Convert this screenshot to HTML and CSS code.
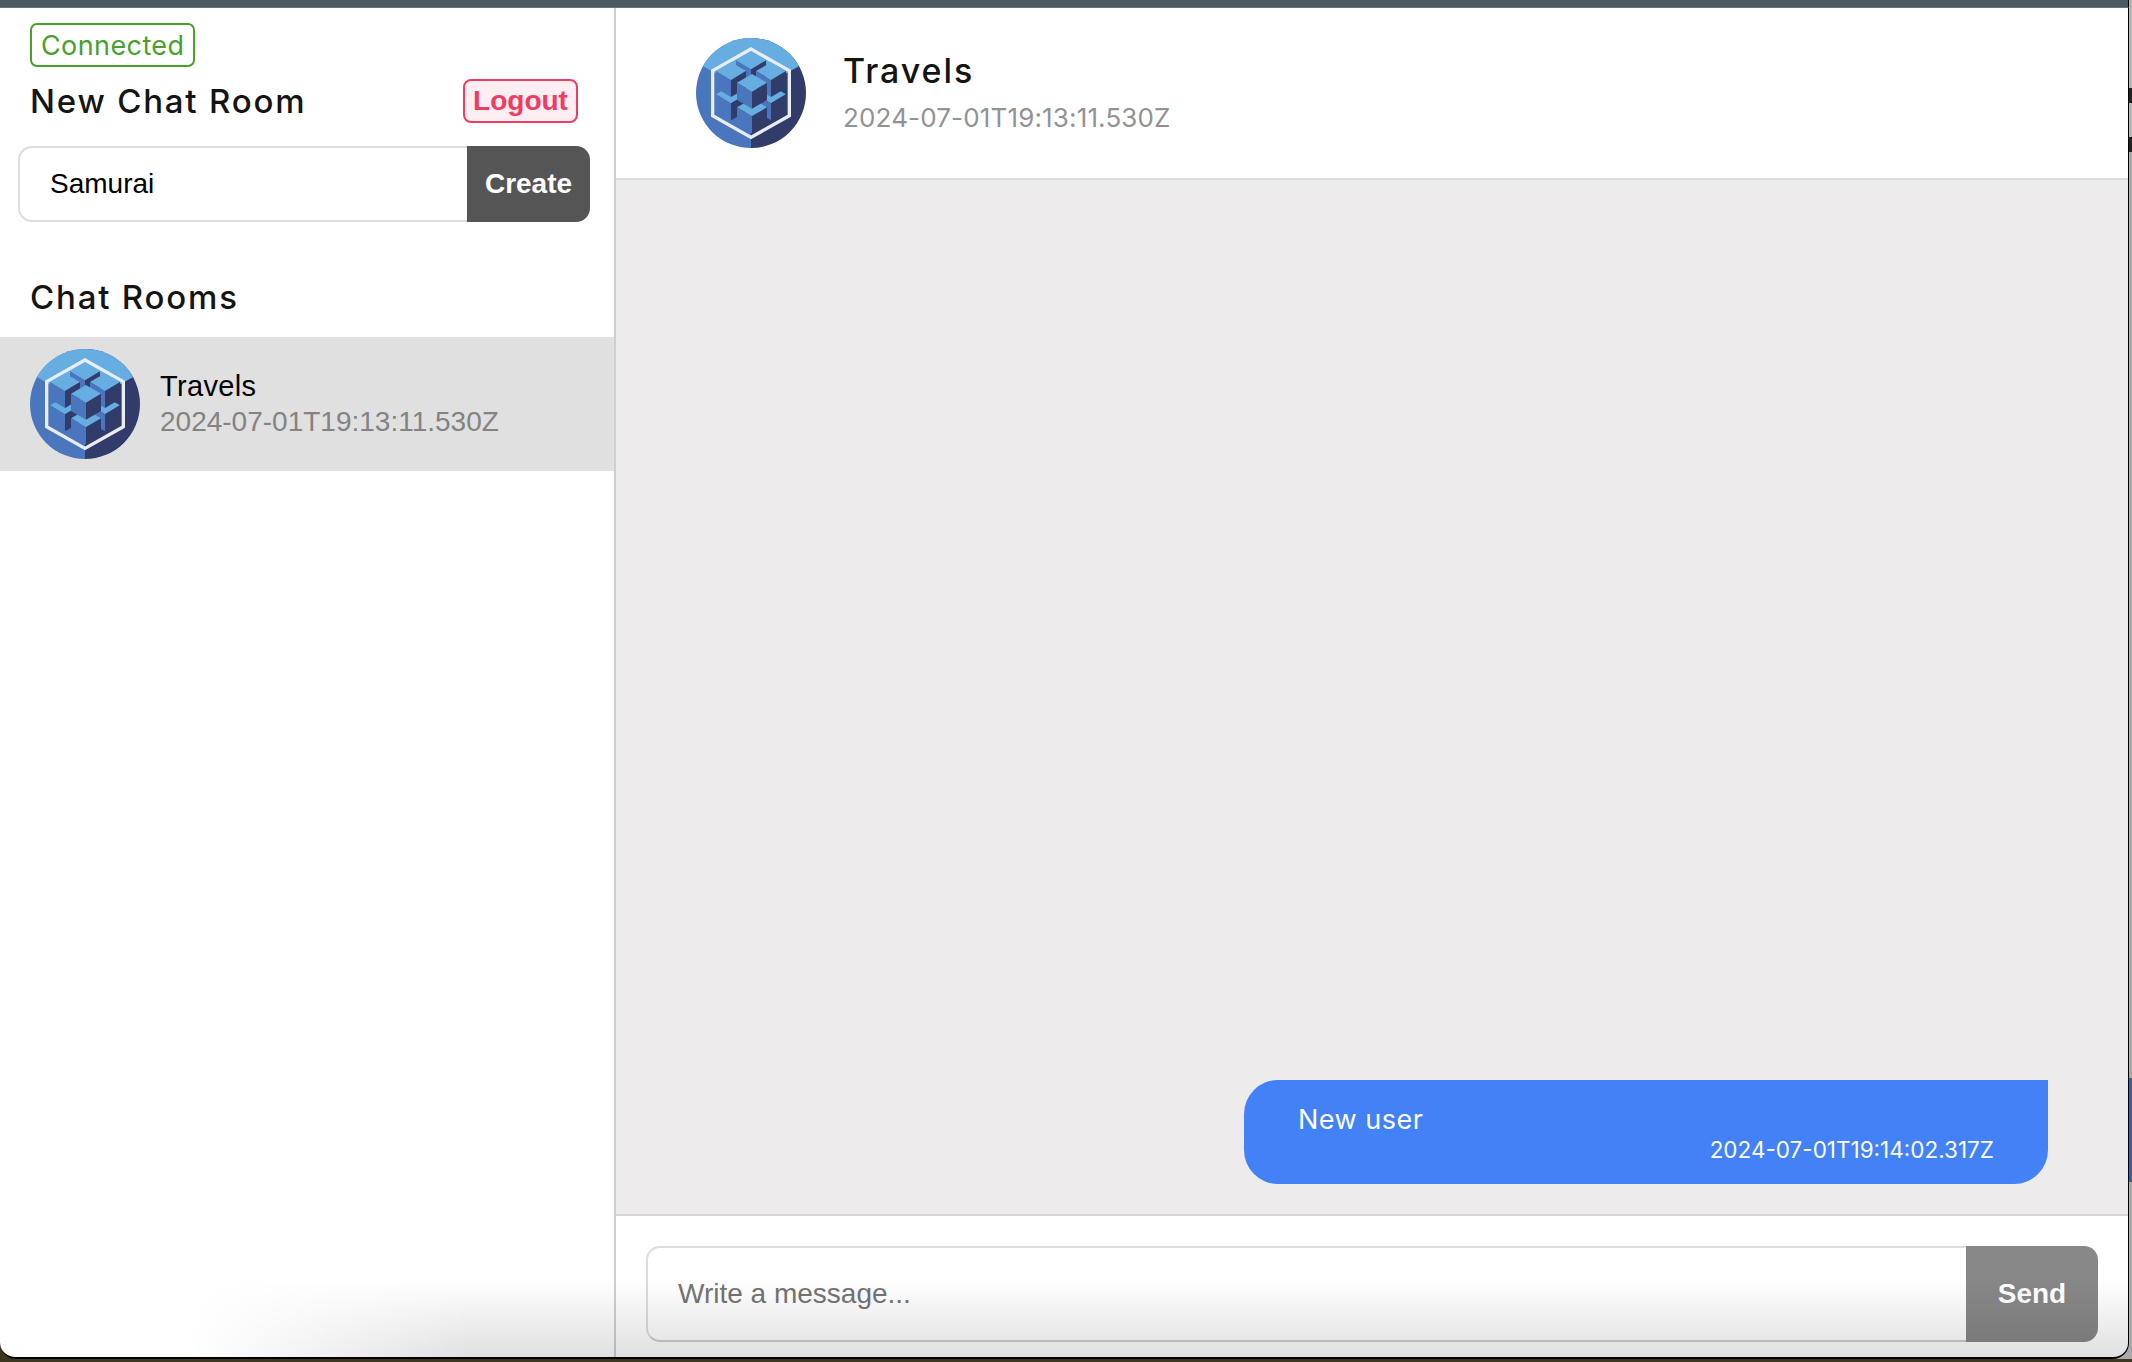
FILE: index.html
```html
<!DOCTYPE html>
<html lang="en">
<head>
<meta charset="utf-8">
<title>Chat</title>
<link rel="stylesheet" href="styles.css">
</head>
<body>
<div class="behind"></div>
<div class="topbar"></div>
<div class="window">
  <aside class="sidebar">
    <div class="side-top">
      <span class="status">Connected</span>
      <div class="title-row">
        <h2 class="heading">New Chat Room</h2>
        <button class="logout">Logout</button>
      </div>
    </div>
    <div class="combo combo-room">
      <input class="field field-room" value="Samurai">
      <button class="action action-create">Create</button>
    </div>
    <h2 class="heading rooms-heading">Chat Rooms</h2>
    <div class="room">
      <svg class="avatar" viewBox="0 0 330 330">
        <defs>
          <g id="cube">
            <path d="M0 0 45 26 0 53-45 26Z" fill="#66ade2"/>
            <path d="M-45 26 0 53V104L-45 78Z" fill="#4a76bd"/>
            <path d="M45 26 0 53V104L45 78Z" fill="#323c6b"/>
          </g>
          <clipPath id="disc"><circle cx="165" cy="165" r="165"/></clipPath>
          <g id="logo" clip-path="url(#disc)">
            <rect x="0" y="0" width="165" height="330" fill="#4a76bd"/>
            <rect x="165" y="0" width="165" height="330" fill="#323c6b"/>
            <path d="M165 165-40 50V-10H370V50Z" fill="#66ade2"/>
            <path d="M165 33 280 98V233L165 298 50 233V98Z" fill="none" stroke="#e8edf2" stroke-width="10"/>
            <use href="#cube" x="165" y="41"/>
            <use href="#cube" x="105" y="143"/>
            <use href="#cube" x="225" y="143"/>
            <use href="#cube" x="105" y="73"/>
            <use href="#cube" x="225" y="73"/>
            <use href="#cube" x="168" y="182"/>
            <use href="#cube" x="168" y="108"/>
          </g>
        </defs>
        <use href="#logo"/>
      </svg>
      <div class="room-text">
        <div class="room-name">Travels</div>
        <div class="room-date">2024-07-01T19:13:11.530Z</div>
      </div>
    </div>
  </aside>
  <main class="chat">
    <header class="chat-head">
      <svg class="avatar" viewBox="0 0 330 330"><use href="#logo"/></svg>
      <div class="head-text">
        <div class="head-name">Travels</div>
        <div class="head-date">2024-07-01T19:13:11.530Z</div>
      </div>
    </header>
    <section class="messages">
      <div class="bubble">
        <div class="bubble-text">New user</div>
        <div class="bubble-time">2024-07-01T19:14:02.317Z</div>
      </div>
    </section>
    <footer class="composer">
      <div class="combo combo-send">
        <input class="field field-msg" placeholder="Write a message...">
        <button class="action action-send">Send</button>
      </div>
    </footer>
  </main>
  <div class="dock-shadow"></div>
</div>
</body>
</html>
```
FILE: styles.css
```css
* { box-sizing: border-box; }
html, body { margin: 0; height: 100%; }
body {
  position: relative;
  width: 2132px;
  height: 1362px;
  overflow: hidden;
  background: #3d3722;
  font-family: "Liberation Sans", Arial, sans-serif;
}
.behind {
  position: absolute;
  top: 0;
  right: 0;
  width: 24px;
  height: 1359px;
  background: linear-gradient(#b5b5b5 0 88px, #222 88px 103px, #b5b5b5 103px 137px, #222 137px 152px, #a9a9a9 152px 1078px, #3560b0 1078px 1182px, #a9a9a9 1182px);
}
.topbar { position: relative; height: 8px; width: 2129px; background: #4a5962; border-bottom: 1px solid #66747c; border-right: 1px solid #000; }
.window {
  position: relative;
  display: flex;
  width: 2129px;
  height: 1351px;
  background: #fff;
  border-right: 1px solid #000;
  border-bottom: 2px solid #000;
  border-radius: 0 0 16px 16px;
  overflow: hidden;
}
.sidebar { width: 616px; flex: none; border-right: 2px solid #cfcfcf; display: flex; flex-direction: column; }
.side-top { padding: 15px 36px 0 30px; }
.status {
  display: inline-block;
  height: 44px;
  padding: 0 9px;
  border: 2px solid #4a9f2d;
  border-radius: 7px;
  color: #4a9f2d;
  font: 400 27px/42px Inter, sans-serif;
  letter-spacing: .4px;
}
.title-row { display: flex; justify-content: space-between; align-items: center; margin-top: 12px; }
.heading { margin: 0; color: #141414; font: 500 33px/44px Inter, sans-serif; letter-spacing: 1.8px; }
.logout {
  height: 44px;
  width: 115px;
  padding: 0;
  border: 2px solid #ee3c64;
  border-radius: 8px;
  background: #fdeef1;
  color: #ee3c64;
  font: 700 28px/40px "Liberation Sans", Arial, sans-serif;
}
.combo { display: flex; }
.combo-room { margin: 23px 24px 0 18px; height: 76px; }
.field {
  flex: 1;
  min-width: 0;
  border: 2px solid #ddd;
  border-right: 0;
  border-radius: 14px 0 0 14px;
  background: transparent;
  color: #000;
  outline: none;
  font: 400 28px "Liberation Sans", Arial, sans-serif;
}
.field::placeholder { color: #757575; opacity: 1; }
.field-room { padding: 0 0 0 30px; }
.action {
  flex: none;
  border: 0;
  border-radius: 0 14px 14px 0;
  color: #fff;
  padding: 0;
  font: 700 28px "Liberation Sans", Arial, sans-serif;
}
.action-create { width: 123px; background: #555; }
.rooms-heading { margin: 53px 0 0 30px; }
.room { display: flex; align-items: center; gap: 20px; height: 134px; margin-top: 18px; padding-left: 30px; background: #e0e0e0; }
.avatar { width: 110px; height: 110px; flex: none; display: block; }
.room-text { padding-top: 2px; }
.room-name { color: #000; font-size: 29px; line-height: 34px; letter-spacing: .35px; }
.room-date { color: #838383; font-size: 28px; line-height: 38px; }
.chat { flex: 1; min-width: 0; display: flex; flex-direction: column; }
.chat-head { display: flex; align-items: center; gap: 37px; height: 172px; flex: none; padding: 0 0 0 80px; border-bottom: 2px solid #dcdcdc; }
.head-text { padding-top: 4px; }
.head-name { color: #141414; font: 500 34px/46px Inter, sans-serif; letter-spacing: 1.9px; }
.head-date { color: #929292; font: 400 26px/48px Inter, sans-serif; letter-spacing: .15px; }
.messages { flex: 1; display: flex; align-items: flex-end; justify-content: flex-end; padding: 0 80px 30px 0; background: #edebec; }
.bubble { width: 804px; height: 104px; padding: 21px 54px 0; background: #4282f6; color: #fff; border-radius: 34px 0 34px 34px; }
.bubble-text { font: 400 27px/37px Inter, sans-serif; letter-spacing: .5px; }
.bubble-time { text-align: right; font: 400 22.5px/24px Inter, sans-serif; }
.composer { flex: none; height: 143px; padding: 30px 30px 0 30px; border-top: 2px solid #d5d5d5; }
.combo-send { height: 96px; }
.field-msg { padding: 0 0 0 30px; border-bottom-color: #cdcdcd; }
.action-send { width: 132px; background: #888; }
.dock-shadow {
  position: absolute;
  left: 0;
  right: 0;
  bottom: 0;
  height: 78px;
  pointer-events: none;
  background: linear-gradient(to top, rgba(0,0,0,.12), rgba(0,0,0,0));
  -webkit-mask-image: linear-gradient(to right, transparent 190px, #000 470px);
  mask-image: linear-gradient(to right, transparent 190px, #000 470px);
}
```
